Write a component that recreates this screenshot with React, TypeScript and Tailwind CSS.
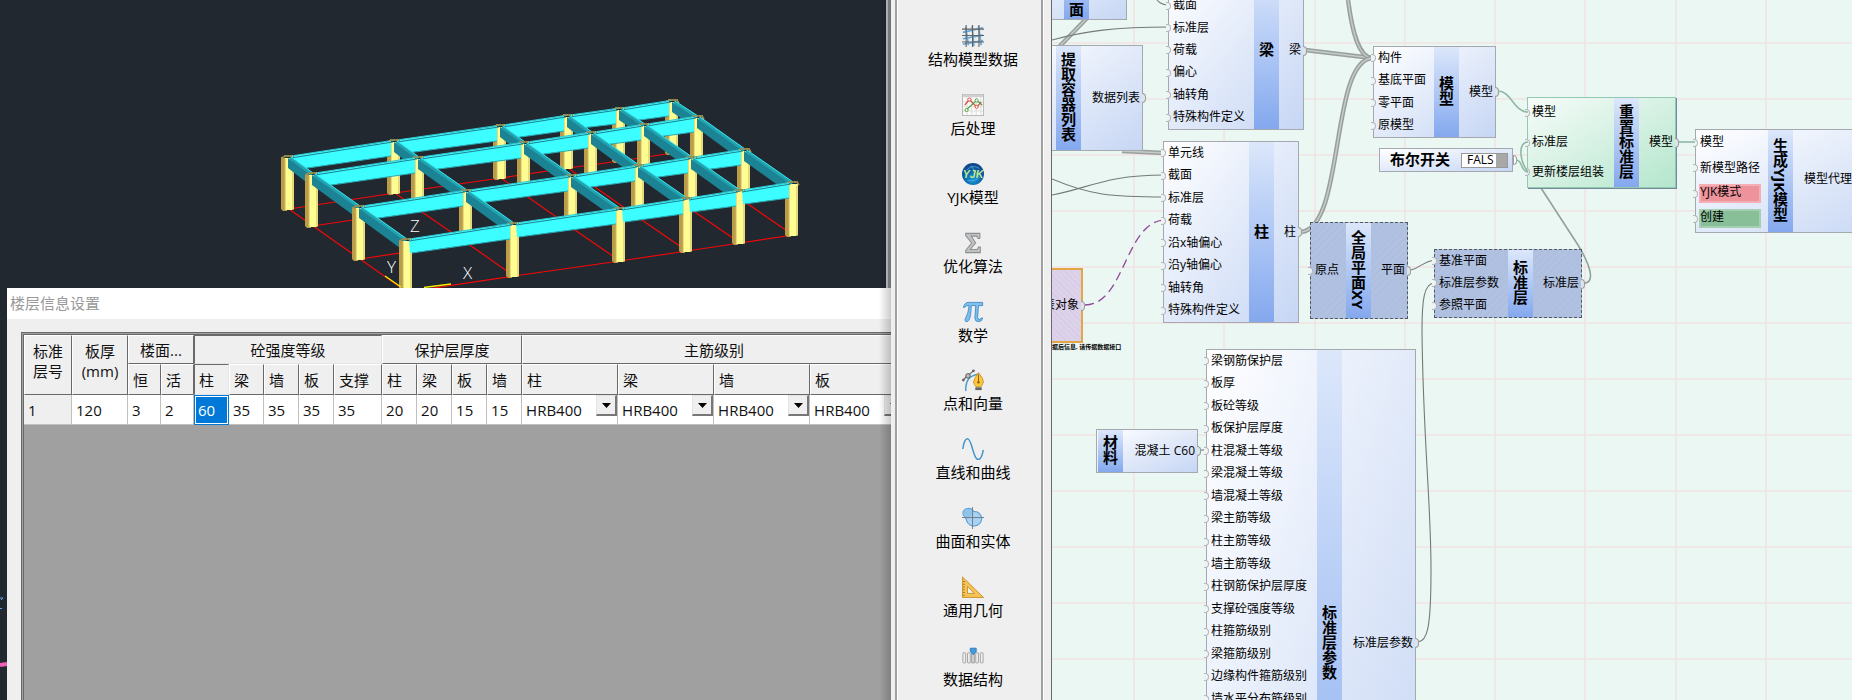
import React from "react";

/* ---------- 3D frame model ---------- */

type Pt = [number, number];

const ROWS: Pt[][] = [
  [[281, 157], [387, 141], [493, 126], [560, 116], [612, 109], [665, 101]],
  [[305, 174], [411, 158], [517, 143], [584, 133], [637, 125], [690, 117]],
  [[352, 207], [459, 191], [564, 176], [631, 166], [684, 158], [737, 150]],
  [[399, 240], [506, 224], [612, 209], [679, 199], [732, 191], [785, 183]],
];

function Column({ x, y }: { x: number; y: number }) {
  return (
    <g>
      <path d={`M${x} ${y + 1}h6v53h-4l-2 -2z`} fill="#bb9d49" />
      <path d={`M${x + 4} ${y + 1}h9v51l-2 1h-7z`} fill="#fffc92" />
      <path d={`M${x + 4} ${y + 2}v51M${x + 12} ${y + 3}v50`} stroke="#cdb765" strokeWidth="1" />
      <path d={`M${x} ${y + 1}l5 -2h7l2 3`} stroke="#a3904f" strokeWidth="1.5" fill="none" />
    </g>
  );
}

function BeamX({ a, b }: { a: Pt; b: Pt }) {
  const x1 = a[0] + 10, y1 = a[1] - 1, x2 = b[0] + 4, y2 = b[1];
  return (
    <g>
      <path d={`M${x1} ${y1}L${x2} ${y2}V${y2 + 15}L${x1 + 1} ${y1 + 14}z`} fill="#3cfdff" />
      <path d={`M${x1} ${y1}L${x2 + 4} ${y2 - 1}`} stroke="#31cbd6" strokeWidth="1" />
      <path d={`M${x1} ${y1 + 2}L${x2 + 2} ${y2 + 1}`} stroke="#1c8291" strokeWidth="1" />
      <path d={`M${x1 + 3} ${y1 + 14}L${x2} ${y2 + 15}`} stroke="#2ba9b4" strokeWidth="1" />
    </g>
  );
}

function BeamY({ a, b }: { a: Pt; b: Pt }) {
  const x1 = a[0] + 7, y1 = a[1] + 1, x2 = b[0] + 8, y2 = b[1] + 1;
  return (
    <g>
      <path d={`M${x1} ${y1}L${x2} ${y2}L${x2 - 7} ${y2 + 7}L${x1} ${y1 + 10}z`} fill="#1b8393" />
      <path d={`M${x1 + 2} ${y1}L${x2 - 1} ${y2 - 1}`} stroke="#22a3b0" strokeWidth="3" />
      <path d={`M${x1 + 3} ${y1 - 1}L${x2} ${y2 - 2}`} stroke="#37e6ee" strokeWidth="1" />
    </g>
  );
}

function FrameModel() {
  const floor = (p: Pt): string => `${p[0] + 8} ${p[1] + 52}`;
  return (
    <svg className="block h-72 w-full" viewBox="0 0 886 288" preserveAspectRatio="xMinYMin slice" aria-label="结构模型">
      <rect width="2000" height="288" fill="#212830" />
      <g stroke="#f40808" strokeWidth="1.2" fill="none">
        {ROWS.map((r, i) => <path key={i} d={`M${r.map(floor).join("L")}`} />)}
        {ROWS[0].map((_, c) => <path key={c} d={`M${ROWS.map((r) => floor(r[c])).join("L")}`} />)}
      </g>
      {ROWS.map((row, r) => (
        <g key={r}>
          {row.map((p, c) => <Column key={c} x={p[0]} y={p[1]} />)}
          {row.slice(0, -1).map((p, c) => <BeamX key={c} a={p} b={row[c + 1]} />)}
          {r < 3 && row.map((p, c) => <BeamY key={c} a={p} b={ROWS[r + 1][c]} />)}
          {row.map((p, c) => (
            <path key={c} d={`M${p[0] + 3} ${p[1] - 1}h10`} stroke="#8d8f55" strokeWidth="2" strokeDasharray="2 1" />
          ))}
        </g>
      ))}
      <path d="M385 276L401 287M424 287.500L451 284" stroke="#f2f200" strokeWidth="1.3" />
      <g fill="#fff" fontSize="17" fontFamily="'Open Sans', sans-serif" fontWeight="300">
        <text x="410" y="232">Z</text>
        <text x="387" y="273">Y</text>
        <text x="463" y="279">X</text>
      </g>
    </svg>
  );
}

/* ---------- Floor settings dialog ---------- */

const head = "overflow-hidden border-t border-l border-r border-b border-t-white border-l-white border-r-[#696969] border-b-[#696969] bg-[#efefef] font-normal";
const pressed = "overflow-hidden border-t border-l border-r border-b border-t-[#696969] border-l-[#696969] border-r-[#e3e3e3] border-b-[#e3e3e3] bg-[#efefef] font-normal";
const sub = "h-[31px] px-1 text-left";
const cell = "h-[30px] border-r border-b border-[#c0c0c0] px-1 text-left";

function GradeSelect({ label }: { label: string }) {
  return (
    <div className="relative flex h-[29px]">
      <select aria-label={label} className="w-full appearance-none bg-transparent pl-1 text-[15px] outline-none">
        <option>HRB400</option>
      </select>
      <span className="pointer-events-none absolute top-0 right-0 flex h-[21px] w-[21px] items-center justify-center border-r-2 border-b-2 border-l border-t border-t-[#e3e3e3] border-l-[#e3e3e3] border-r-[#777] border-b-[#777] bg-[#efefef]">
        <svg className="h-[5px] w-[9px]" viewBox="0 0 9 5"><path d="M0 0h9L4.500 5z" fill="#000" /></svg>
      </span>
    </div>
  );
}

function FloorDialog() {
  const widths = ["w-12", "w-14", "w-[33px]", "w-[33px]", "w-[35px]", "w-[35px]", "w-[35px]", "w-[35px]", "w-12", "w-[35px]", "w-[35px]", "w-[35px]", "w-[35px]", "w-24", "w-24", "w-24", "w-24"];
  const subs = ["恒", "活", "柱", "梁", "墙", "板", "支撑", "柱", "梁", "板", "墙", "柱", "梁", "墙", "板"];
  const values = ["1", "120", "3", "2", "60", "35", "35", "35", "35", "20", "20", "15", "15"];
  return (
    <section className="ml-[7px] flex min-h-0 flex-1 flex-col bg-[#efefef] text-[15px] text-[#111]">
      <h1 className="flex h-[31px] shrink-0 items-center bg-white px-[3px] text-[15px] text-[#999]">楼层信息设置</h1>
      <div className="mt-[13px] ml-[14px] min-h-0 flex-1 overflow-hidden border-t-[3px] border-l-[3px] border-double border-[#696969] bg-[#a0a0a0]">
        <table className="w-[882px] table-fixed border-separate border-spacing-0 leading-5">
          <colgroup>{widths.map((w, i) => <col key={i} className={w} />)}</colgroup>
          <thead>
            <tr>
              <th rowSpan={2} className={`${head} pb-2`}>标准<br />层号</th>
              <th rowSpan={2} className={`${head} pb-2`}>板厚<br />(mm)</th>
              <th colSpan={2} className={`${head} h-[29px]`}>楼面...</th>
              <th colSpan={5} className={pressed}>砼强度等级</th>
              <th colSpan={4} className={head}>保护层厚度</th>
              <th colSpan={4} className={head}>主筋级别</th>
            </tr>
            <tr>
              {subs.map((s, i) => <th key={i} className={`${i === 2 ? pressed : head} ${sub}`}>{s}</th>)}
            </tr>
          </thead>
          <tbody>
            <tr>
              {values.map((v, i) =>
                i === 4 ? (
                  <td key={i} className="h-[30px] border border-[#0078d7] bg-[#0078d7] px-[3px] text-white outline-1 -outline-offset-2 outline-white">{v}</td>
                ) : (
                  <td key={i} className={`${cell} ${i === 0 ? "bg-[#efefef]" : "bg-white"}`}>{v}</td>
                ),
              )}
              {["柱主筋", "梁主筋", "墙主筋", "板主筋"].map((l) => (
                <td key={l} className="h-[30px] border-r border-b border-[#c0c0c0] bg-white p-0"><GradeSelect label={l} /></td>
              ))}
            </tr>
          </tbody>
        </table>
      </div>
    </section>
  );
}

/* ---------- Category toolbar ---------- */

const icon = "h-6 w-6";

const GridIcon = () => (
  <svg className={icon} viewBox="0 0 24 24" fill="none">
    <path d="M1 8l22-5M1 15l22-4M1 21l22-4M4 2l3 20M11 1l2 22M18 1l3 21" stroke="#64a5d8" strokeWidth="1.800" />
    <path d="M0 4.500h24M0 11.500h24M0 18.500h24M4.500 0v24M11.500 0v24M18.500 0v24" stroke="#636363" strokeWidth="1.200" />
  </svg>
);
const ChartIcon = () => (
  <svg className={icon} viewBox="0 0 24 24" fill="none">
    <rect x=".5" y=".5" width="23" height="23" fill="#fbfbfb" stroke="#b4b4b4" />
    <path d="M1 2h22" stroke="#d0d0d0" strokeWidth="3" />
    <path d="M1 8.500h22M1 13.500h22M1 18.500h22M5.500 3v20M10.500 3v20M15.500 3v20M20.500 3v20" stroke="#dcdcdc" />
    <path d="M3 12l5-6 8 8 5-5" stroke="#df4a3d" strokeWidth="1.300" />
    <path d="M5 17L16 7l6 5" stroke="#459c2c" strokeWidth="1.300" />
    <circle cx="8" cy="6" r="1.700" fill="#fff" stroke="#df4a3d" /><circle cx="16" cy="14" r="1.700" fill="#fff" stroke="#df4a3d" />
    <circle cx="5" cy="17.500" r="1.700" fill="#fff" stroke="#459c2c" /><circle cx="16" cy="7" r="1.700" fill="#fff" stroke="#459c2c" />
  </svg>
);
const YjkIcon = () => (
  <svg className={icon} viewBox="0 0 24 24">
    <defs>
      <radialGradient id="globe" cx=".5" cy=".75" r=".75"><stop offset="0" stopColor="#179ad8" /><stop offset=".6" stopColor="#0d5ba3" /><stop offset="1" stopColor="#123f86" /></radialGradient>
    </defs>
    <circle cx="12" cy="12" r="12" fill="url(#globe)" />
    <path d="M5 8C9 3 15 3 19 6M10 3l9 13M6 19q6 2 12-2" stroke="#5bb1d8" strokeWidth=".8" fill="none" />
    <text x="12" y="16.500" fontSize="11.500" fontWeight="700" fontStyle="italic" textAnchor="middle" fill="#c3e88a" fontFamily="'Liberation Sans', sans-serif">YJK</text>
  </svg>
);
const SigmaIcon = () => (
  <svg className={icon} viewBox="0 0 24 24">
    <path d="M4 1.500h15.500V7h-2L16 4.500H10L15 12l-6 7h7.500L18 16.500h2V22.500H4V20l6.500-8L4 4z" fill="#bfc1c3" stroke="#8d8f91" strokeWidth="1.100" />
  </svg>
);
const PiIcon = () => (
  <svg className={icon} viewBox="0 0 24 24">
    <path d="M1.500 7Q3 1.500 7 1.500H22.500V5H18L17 18q0 2 2 2 1.500 0 2-1.500h1.500q-.5 4-4.500 4-4 0-4-4L15 5H10Q10 17 7.500 21q-1 2-3 1.500-2-.8-1-3Q7 14 7.800 5 4 4.500 2.800 7z" fill="#7cc0ee" stroke="#3a83c0" strokeWidth=".9" />
  </svg>
);
const PenIcon = () => (
  <svg className={icon} viewBox="0 0 24 24" fill="none">
    <path d="M4 24C4 13 7 7 19 5.500" stroke="#4a9bd0" strokeWidth="1.600" />
    <path d="M1 12L13 1.500" stroke="#666" strokeWidth="1.300" />
    <circle cx="1.500" cy="12" r="1.500" fill="#666" /><circle cx="12.500" cy="2" r="1.500" fill="#666" />
    <circle cx="6.500" cy="7.500" r="2.500" fill="#bbb" stroke="#555" />
    <path d="M18 4q5 6 5.500 10-1 3-3 5.500h-5Q13 17 12.500 14 14 9 18 4z" fill="#fbc73c" stroke="#c78a1b" strokeWidth=".9" />
    <path d="M18 6v8" stroke="#8a5a0a" /><circle cx="18" cy="14.500" r="1.300" fill="#8a5a0a" />
    <path d="M14.500 20h7v3h-7z" fill="#666" />
  </svg>
);
const CurveIcon = () => (
  <svg className={icon} viewBox="0 0 24 24" fill="none">
    <path d="M.8 12C2 4 4 .8 6 .8 11 .8 12 23.500 17.500 23.500 20.500 23.500 22 20 23.200 13" stroke="#3f93c9" strokeWidth="1.600" />
  </svg>
);
const SolidIcon = () => (
  <svg className={icon} viewBox="0 0 24 24" fill="none">
    <path d="M6.500 1.500C11 1 11.500 4 13 5c5-.5 8.500 3.500 8.500 8A8.500 8.500 0 0 1 5 15C5 12 3 11 1.500 9 0 5 2.500 1.800 6.500 1.500z" fill="#a9d2f3" stroke="#5b9fd3" strokeWidth="1.200" />
    <circle cx="6.500" cy="6.500" r="4.500" fill="#8fc3ec" />
    <path d="M11.500 0v24M0 11.500h24" stroke="#707880" strokeWidth="1" />
  </svg>
);
const RulerIcon = () => (
  <svg className={icon} viewBox="0 0 24 24">
    <path fillRule="evenodd" d="M.5 1L23.500 23.500H.5zM6 11.500v7.500h7.500z" fill="#f5c354" stroke="#c98f2c" strokeWidth="1" />
    <path d="M1 6h2M1 9h2M1 12h2M1 15h2M1 18h2M1 21h2" stroke="#9c6c1a" />
  </svg>
);
const DataIcon = () => (
  <svg className={icon} viewBox="0 0 24 24">
    {[1, 6, 15, 20].map((x) => <rect key={x} x={x} y="8.500" width="3" height="11" rx=".5" fill="#efefef" stroke="#a0a0a0" />)}
    <rect x="10.500" y="8.500" width="3" height="11" fill="#cfd2d5" stroke="#a0a0a0" />
    <path d="M9 3.500h6.500V7L12.200 10.500 9 7z" fill="#419be0" stroke="#2a73b3" strokeWidth=".9" />
  </svg>
);

const CATEGORIES: [string, React.ComponentType][] = [
  ["结构模型数据", GridIcon], ["后处理", ChartIcon], ["YJK模型", YjkIcon], ["优化算法", SigmaIcon], ["数学", PiIcon],
  ["点和向量", PenIcon], ["直线和曲线", CurveIcon], ["曲面和实体", SolidIcon], ["通用几何", RulerIcon], ["数据结构", DataIcon],
];

function Toolbar() {
  return (
    <div className="flex border-r border-[#696969] bg-[#efefef] pl-1">
      <nav className="flex flex-1 flex-col justify-between border-x-2 border-l-[#a0a0a0] border-r-[#a0a0a0] pt-[25px] pb-[9px] pl-2 shadow-[inset_1px_0_0_#fff,1px_0_0_#fff]">
        {CATEGORIES.map(([name, Icon]) => (
          <button key={name} className="flex h-[46px] shrink-0 flex-col items-center text-[15px] leading-6 text-black">
            <Icon />
            {name}
          </button>
        ))}
      </nav>
      <div className="w-2" />
    </div>
  );
}

/* ---------- Node canvas ---------- */

type Tone = "blue" | "green" | "selected" | "purple";

const TONES: Record<Tone, string> = {
  blue: "border border-[#a5a8ae] bg-linear-to-br from-white to-[#c6d6f4]",
  green: "border border-[#93c9b1] bg-linear-to-br from-[#f6fcf9] to-[#b4e6cd] shadow-[1px_1px_0_#74899a]",
  selected: "border border-dashed border-[#55585f] bg-[repeating-linear-gradient(135deg,#afbfdf_0_4px,#b4c3e1_4px_5px)]",
  purple: "border-2 border-[#e3a646] bg-[repeating-linear-gradient(45deg,#dcd3e8_0_3px,#d7c9ec_3px_4px)]",
};

interface NodeProps {
  box: string;
  inputsWidth?: string;
  inputs?: string[];
  title?: string;
  output?: string;
  tone?: Tone;
  align?: "center" | "end";
}

const Port = ({ side }: { side: "left" | "right" }) => (
  <i
    className={
      side === "left"
        ? "absolute top-1/2 -left-[3px] h-2 w-[5px] -translate-y-1/2 rounded-r-full border border-l-0 border-[#b3b6ba] bg-[#eef4f4]"
        : "absolute top-1/2 -right-1 h-2.5 w-1 -translate-y-1/2 rounded-r-full border border-l-0 border-[#9a9da1] bg-[#dfe4e6]"
    }
  />
);

function FlowNode({ box, inputsWidth = "w-0", inputs = [], title, output, tone = "blue", align = "center" }: NodeProps) {
  return (
    <article className={`absolute flex text-[12px] leading-4 whitespace-nowrap text-black ${box} ${TONES[tone]}`}>
      <ul className={`flex shrink-0 flex-col ${inputsWidth}`}>
        {inputs.map((t, i) => (
          <li key={i} className="relative flex flex-1 items-center pb-px pl-1">
            <Port side="left" />
            {t === "YJK模式" || t === "创建" ? (
              <span className={`-ml-px mr-[7px] h-[19px] flex-1 border-2 ${t === "创建" ? "border-[#a5cfb3] bg-[#88bf98]" : "border-[#f4aeb4] bg-[#ee929b]"}`}>
                <span className="-mt-0.5 -ml-px block">{t}</span>
              </span>
            ) : t}
          </li>
        ))}
      </ul>
      {title && (
        <h2 className={`flex w-[25px] shrink-0 items-center bg-linear-to-b from-[#dce7fa] to-[#84a8ee] pr-px pb-0.5 text-[15px] leading-6 font-bold [writing-mode:vertical-rl] ${align === "end" ? "justify-end" : "justify-center"}`}>
          {title}
        </h2>
      )}
      <div className="relative flex flex-1 items-center justify-end pr-0.5 pb-px">
        {output}
        {output && <Port side="right" />}
      </div>
    </article>
  );
}

const V_LINES = [1134, 1224, 1315, 1405, 1495, 1585, 1676, 1766];
const H_LINES = [43, 99, 155, 211, 267, 323, 379, 435, 491, 547, 603, 659];
const TRUNKS = [
  "M1305 50L1372 58",
  "M1348 0C1352 30 1358 57 1372 58",
  "M1302 232C1345 225 1330 62 1372 58",
  "M1087 18L1059 47",
  "M1122 151L1164 153",
];
const WIRES = [
  "M1157 0Q1161 5 1169 5",
  "M1052 40C1085 31 1115 27 1169 27",
  "M1052 195C1090 188 1105 175 1165 175",
  "M1052 179C1090 195 1110 197 1165 197",
  "M1411 270C1420 268 1422 262 1434 260",
  "M1434 283C1424 284 1422 300 1422 330C1423 440 1431 500 1431 570C1431 630 1427 641 1418 642",
  "M1198 450H1207",
];
const GREEN_WIRES = [
  "M1498 91C1511 91 1514 112 1528 112",
  "M1516 160C1523 160 1520 171 1528 172",
  "M1528 172C1519 160 1518 142 1528 142",
  "M1678 142H1695",
];

function Wires() {
  return (
    <svg className="absolute inset-0 h-full w-full" aria-hidden="true">
      <g transform="translate(-1052 0)" fill="none">
        <g stroke="#f2e3e3" strokeWidth="1.500">
          {V_LINES.map((x) => <path key={x} d={`M${x} 0V3000`} />)}
          {H_LINES.map((y) => <path key={y} d={`M1052 ${y}H5000`} />)}
        </g>
        {TRUNKS.map((d) => (
          <g key={d}>
            <path d={d} stroke="#999f9d" strokeWidth="4.500" />
            <path d={d} stroke="#c3ccc9" strokeWidth="1.500" />
          </g>
        ))}
        <g stroke="#747a78" strokeWidth="1.100">{WIRES.map((d) => <path key={d} d={d} />)}</g>
        <path d="M1583 283C1595 284 1592 268 1578 245L1541 188" stroke="#8ea39a" strokeWidth="1.600" />
        <path d="M1085 305C1125 305 1125 221 1165 220" stroke="#93479b" strokeWidth="1.300" strokeDasharray="9 5" />
      </g>
    </svg>
  );
}

const PARAMS = [
  "梁钢筋保护层", "板厚", "板砼等级", "板保护层厚度", "柱混凝土等级", "梁混凝土等级", "墙混凝土等级", "梁主筋等级", "柱主筋等级",
  "墙主筋等级", "柱钢筋保护层厚度", "支撑砼强度等级", "柱箍筋级别", "梁箍筋级别", "边缘构件箍筋级别", "墙水平分布筋级别",
  "", "", "", "", "", "", "", "", "", "",
];

function Canvas() {
  return (
    <main className="relative overflow-hidden bg-[#ebf7f3]">
      <Wires />
      <FlowNode box="-left-12 -top-[50px] h-[70px] w-[123px]" inputsWidth="w-[59px]" title="面" align="end" />
      <FlowNode box="-left-12 top-[45px] h-[106px] w-[139px]" inputsWidth="w-[51px]" title="提取容器列表" output="数据列表" />
      <FlowNode box="left-[116px] -top-[29px] h-[159px] w-[136px]" inputsWidth="w-[85px]" title="梁" output="梁"
        inputs={["", "截面", "标准层", "荷载", "偏心", "轴转角", "特殊构件定义"]} />
      <FlowNode box="left-[111px] top-[141px] h-[182px] w-[136px]" inputsWidth="w-[85px]" title="柱" output="柱"
        inputs={["单元线", "截面", "标准层", "荷载", "沿x轴偏心", "沿y轴偏心", "轴转角", "特殊构件定义"]} />
      <FlowNode box="left-[321px] top-[46px] h-[92px] w-[123px]" inputsWidth="w-[60px]" title="模型" output="模型"
        inputs={["构件", "基底平面", "零平面", "原模型"]} />
      <div className="absolute top-[148px] left-[327px] flex h-6 w-[134px] items-center justify-between border border-[#a5a8ae] bg-linear-to-br from-white to-[#c6d6f4] pr-1 pl-2.5 text-[15px] font-bold text-black">
        <label htmlFor="bool-switch" className="pb-0.5">布尔开关</label>
        <button id="bool-switch" className="flex h-[15px] w-[47px] items-center justify-between border border-[#999] bg-white pl-[5px] text-[12px] leading-3 font-normal">
          FALS<span className="h-full w-[11px] bg-[#a8a8a8]" />
        </button>
        <i className="absolute top-1.5 -right-[5px] h-2.5 w-1 rounded-r-full border border-[#9a9da1] bg-white" />
      </div>
      <FlowNode box="left-[475px] top-[97px] h-[91px] w-[149px]" inputsWidth="w-[86px]" title="重置标准层" output="模型" tone="green"
        inputs={["模型", "标准层", "更新楼层组装"]} />
      <FlowNode box="left-[643px] top-[129px] h-[104px] w-[208px]" inputsWidth="w-[72px]" title="生成YJK模型"
        inputs={["模型", "新模型路径", "YJK模式", "创建"]} />
      <span className="absolute top-[171px] left-[752px] text-[12px] leading-4 whitespace-nowrap text-black">模型代理</span>
      <FlowNode box="left-[258px] top-[222px] h-[97px] w-[98px]" inputsWidth="w-[35px]" title="全局平面XY" output="平面" tone="selected" inputs={["原点"]} />
      <FlowNode box="left-[382px] top-[249px] h-[69px] w-[148px]" inputsWidth="w-[73px]" title="标准层" output="标准层" tone="selected"
        inputs={["基准平面", "标准层参数", "参照平面"]} />
      <FlowNode box="-left-8 top-[268px] h-[75px] w-[63px]" output="表对象" tone="purple" />
      <p className="absolute top-[343px] left-0 text-[6px] leading-[8px] font-bold whitespace-nowrap text-black">据后信息, 请传据数据接口</p>
      <FlowNode box="left-[44px] top-[429px] h-11 w-[102px]" inputsWidth="w-px" title="材料" output="混凝土 C60" />
      <FlowNode box="left-[154px] top-[349px] h-[588px] w-[210px]" inputsWidth="w-[110px]" title="标准层参数" output="标准层参数" inputs={PARAMS} />
      <svg className="pointer-events-none absolute inset-0 h-full w-full" aria-hidden="true">
        <g transform="translate(-1052 0)" fill="none" stroke="#8fb8a4" strokeWidth="1.600">
          {GREEN_WIRES.map((d) => <path key={d} d={d} />)}
        </g>
      </svg>
    </main>
  );
}

export default function App() {
  return (
    <div className="grid h-screen grid-cols-[minmax(0,891px)_161px_minmax(0,1fr)] grid-rows-[minmax(0,1fr)] overflow-hidden bg-[#efefef] font-['Open_Sans','Noto_Sans_CJK_SC',sans-serif]">
      <div className="relative flex min-h-0 flex-col overflow-hidden bg-[#212830]">
        <div className="flex">
          <div className="min-w-0 flex-1"><FrameModel /></div>
          <div className="w-[5px] border-l-2 border-[#c8c8cc] bg-[#8e8e98]" />
        </div>
        <FloorDialog />
        <svg className="absolute bottom-0 left-0 h-[140px] w-[7px]" viewBox="0 0 7 140" aria-hidden="true">
          <path d="M0 38h3l-2 2M0 48.500h2" stroke="#63a4e8" fill="none" />
          <path d="M0 105L7 104" stroke="#f060b4" strokeWidth="4" />
        </svg>
        <div className="pointer-events-none absolute inset-y-0 right-0 w-3 bg-linear-to-r from-transparent to-black/20" />
      </div>
      <Toolbar />
      <Canvas />
    </div>
  );
}
